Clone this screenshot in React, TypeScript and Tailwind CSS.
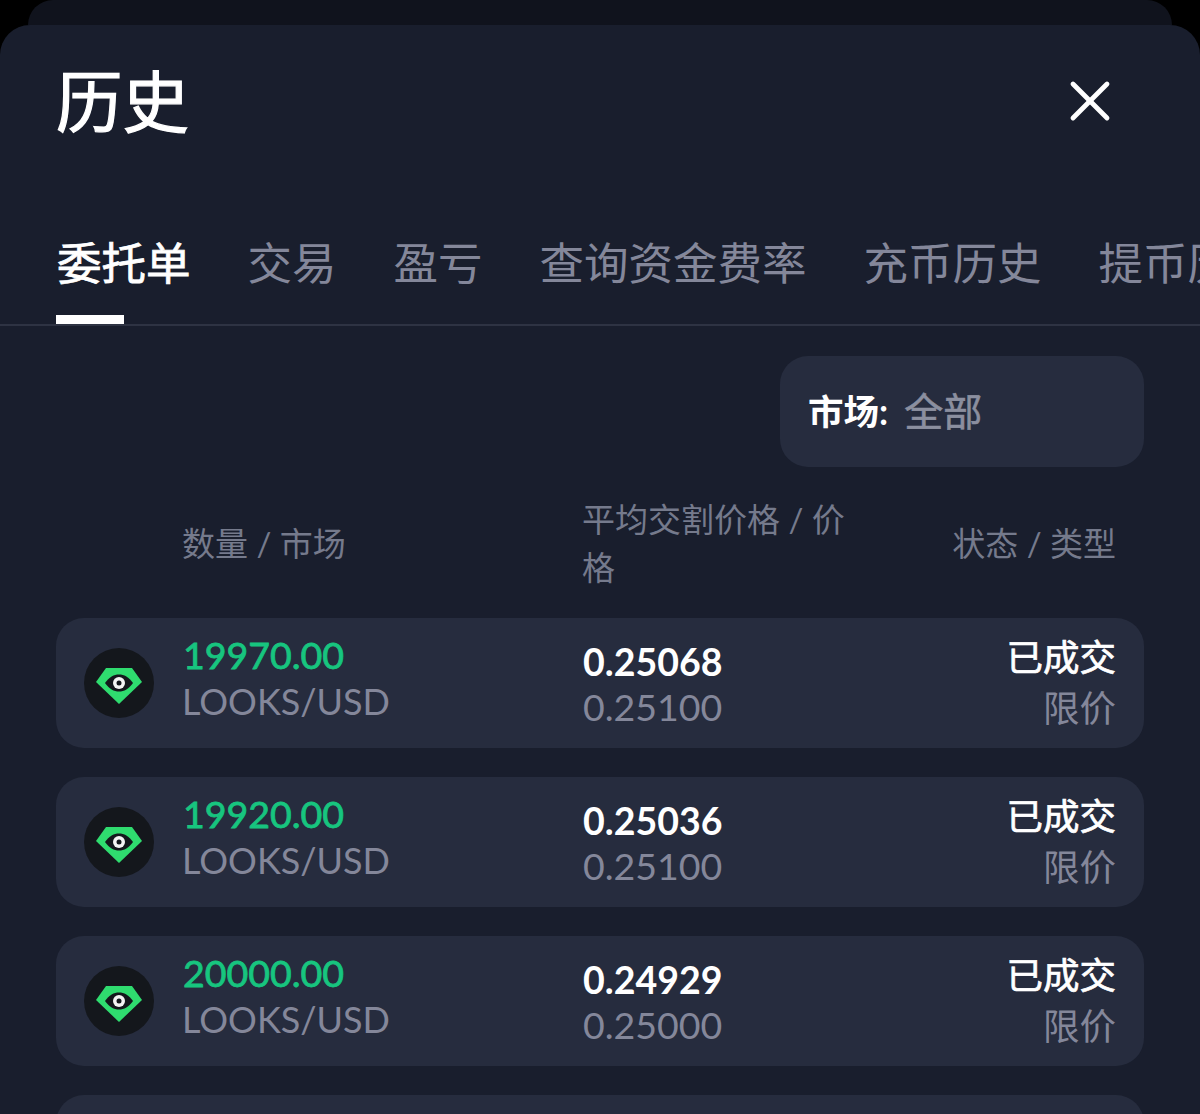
import { X } from "lucide-react";

const orders = [
  { qty: "19970.00", avg: "0.25068", price: "0.25100" },
  { qty: "19920.00", avg: "0.25036", price: "0.25100" },
  { qty: "20000.00", avg: "0.24929", price: "0.25000" },
];

const tabs = ["交易", "盈亏", "查询资金费率", "充币历史", "提币历史"];

const LooksIcon = () => (
  <div className="flex h-[70px] w-[70px] shrink-0 items-center justify-center rounded-full bg-[#14171c]">
    <svg className="mt-[5px]" width="46" height="36" viewBox="0 0 46 36">
      <path d="M10 0h26l10 14-23 22L0 14z" fill="#2fdc6f" />
      <path d="M9 15c4-6 9-8.500 14-8.500S33 9 37 15c-4 6-9 8.500-14 8.500S13 21 9 15z" fill="#14171c" />
      <circle cx="23" cy="15" r="6" fill="#f4f4f4" />
      <circle cx="23" cy="15" r="2.500" fill="#14171c" />
    </svg>
  </div>
);

export default function App() {
  return (
    <div className="h-[1114px] w-[1200px] overflow-hidden bg-black font-['Lato','Noto_Sans_CJK_SC',sans-serif]">
      <div className="mx-[28px] h-[25px] rounded-t-[26px] bg-[#10131d]" />
      <div className="h-[1089px] overflow-hidden rounded-t-[30px] bg-[#191e2d]">
        <div className="flex h-[152px] items-center justify-between pl-[56px] pr-[76px]">
          <h1 className="text-[66.500px] leading-none text-white [-webkit-text-stroke:1.2px_white]">历史</h1>
          <X className="text-white" size={68} strokeWidth={1.7} />
        </div>

        <div className="relative flex h-[149px] items-end gap-[57px] overflow-hidden whitespace-nowrap border-b-2 border-[#2e3343] pb-[31px] pl-[57px]">
          <span className="text-[44.5px] leading-[60px] text-white [-webkit-text-stroke:0.8px_white]">委托单</span>
          {tabs.map((t) => (
            <span key={t} className="shrink-0 text-[44.5px] leading-[60px] text-[#84879a]">
              {t}
            </span>
          ))}
          <div className="absolute bottom-0 left-[56px] h-[9px] w-[68px] bg-white" />
        </div>

        <div className="px-[56px]">
          <div className="mt-[30px] flex justify-end">
            <div className="flex h-[111px] w-[364px] items-center gap-[16px] rounded-[28px] bg-[#262c3e] pl-[28px]">
              <span className="text-[35.500px] font-bold text-white">市场:</span>
              <span className="text-[39px] text-[#8b8f9f] [-webkit-text-stroke:0.6px_#8b8f9f]">全部</span>
            </div>
          </div>

          <div className="mt-[28px] flex h-[96px] items-center pr-[28px] text-[33px] leading-[48px] text-[#757a8c]">
            <div className="w-[527px] pl-[126px]">数量 / 市场</div>
            <div className="w-[270px] -translate-x-px">平均交割价格 / 价格</div>
            <div className="flex-1 text-right">状态 / 类型</div>
          </div>

          <div className="mt-[27px] flex flex-col gap-[29px]">
            {orders.map((o) => (
              <div key={o.qty} className="flex h-[130px] items-center rounded-[28px] bg-[#262c3e] pl-[28px] pr-[28px]">
                <div className="flex w-[499px] items-center gap-[29px]">
                  <LooksIcon />
                  <div className="-mt-[10px] flex flex-col">
                    <span className="text-[37.500px] leading-[46px] text-[#17c57f] [-webkit-text-stroke:0.8px_#17c57f]">{o.qty}</span>
                    <span className="-ml-px text-[36px] leading-[46px] text-[#84879a]">LOOKS/USD</span>
                  </div>
                </div>
                <div className="flex flex-col pt-[2px]">
                  <span className="text-[37.500px] font-bold leading-[45px] text-white">{o.avg}</span>
                  <span className="text-[37.500px] leading-[45px] text-[#84879a]">{o.price}</span>
                </div>
                <div className="flex flex-1 flex-col items-end">
                  <span className="text-[36.500px] leading-[51px] text-white [-webkit-text-stroke:0.7px_white]">已成交</span>
                  <span className="text-[36.500px] leading-[51px] text-[#84879a]">限价</span>
                </div>
              </div>
            ))}
            <div className="h-[130px] rounded-[28px] bg-[#262c3e]" />
          </div>
        </div>
      </div>
    </div>
  );
}
